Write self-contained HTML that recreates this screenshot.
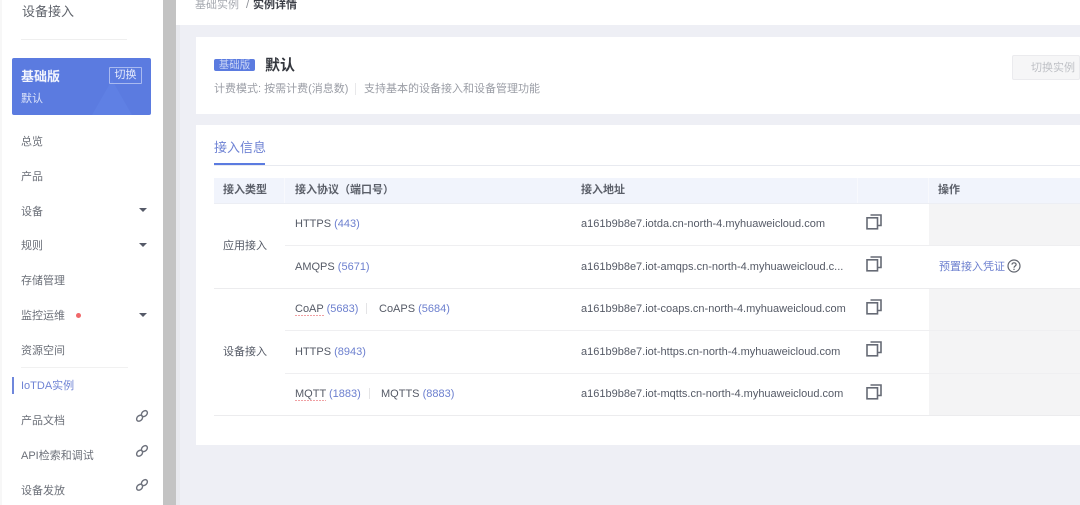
<!DOCTYPE html>
<html><head><meta charset="utf-8">
<style>
html,body{margin:0;padding:0}
body{width:1080px;height:505px;overflow:hidden;position:relative;background:#eeeff5;font-family:"Liberation Sans","Noto Sans CJK SC",sans-serif;color:#575d6c}
#w{position:absolute;left:0;top:0;width:1080px;height:505px;filter:blur(0.35px)}
.a{position:absolute;white-space:nowrap;line-height:16px}
.r{position:absolute}
.m{font-size:11px;left:21px;color:#6b6f78}
.t{font-size:11px;color:#555a66}
.b{color:#6d80cf}
.ar{position:absolute;left:139px;width:0;height:0;border-left:4px solid transparent;border-right:4px solid transparent;border-top:4.5px solid #555a68}
svg{position:absolute}
.u{position:absolute;height:1px;background:repeating-linear-gradient(90deg,#f0a0a3 0 2px,transparent 2px 3px)}
</style></head><body><div id="w">
<div class="r" style="left:0;top:0;width:163px;height:505px;background:#fff"></div>
<div class="r" style="left:0;top:0;width:2px;height:505px;background:#f7f7f7"></div>
<div class="r" style="left:163px;top:0;width:13px;height:505px;background:#c3c3c3"></div>
<div class="r" style="left:176px;top:0;width:4px;height:505px;background:#e8e9ee"></div>
<div class="r" style="left:176px;top:0;width:904px;height:25px;background:#fff"></div>
<div class="r" style="left:196px;top:37px;width:884px;height:77px;background:#fff"></div>
<div class="r" style="left:196px;top:125px;width:884px;height:320px;background:#fff"></div>

<div class="a" style="left:22px;top:4px;font-size:13px;color:#60646c">设备接入</div>
<div class="r" style="left:21px;top:39px;width:106px;height:1px;background:#efefef"></div>
<div class="r" style="left:12px;top:58px;width:139px;height:57px;background:#5b7be0;border-radius:2px;overflow:hidden">
<svg style="left:72px;top:20px" width="52" height="37"><path d="M28 2L48 37H8Z" fill="#6283e6" opacity=".6"/></svg>
</div>
<div class="a" style="left:21px;top:69px;font-size:13px;font-weight:bold;color:#f3f5fd">基础版</div>
<div class="a" style="left:21px;top:91px;font-size:11px;color:#dde4fa">默认</div>
<div class="r" style="left:109px;top:67px;width:31px;height:15px;border:1px solid #a9baf0;border-radius:1px"></div>
<div class="a" style="left:109px;top:68px;width:33px;height:15px;font-size:11px;line-height:15px;text-align:center;color:#e4e9fb">切换</div>

<div class="a m" style="top:134px">总览</div>
<div class="a m" style="top:169px">产品</div>
<div class="a m" style="top:204px">设备</div><div class="ar" style="top:208px"></div>
<div class="a m" style="top:238px">规则</div><div class="ar" style="top:243px"></div>
<div class="a m" style="top:273px">存储管理</div>
<div class="a m" style="top:308px">监控运维</div>
<div class="r" style="left:76px;top:313px;width:5px;height:5px;border-radius:50%;background:#f0686a"></div>
<div class="ar" style="top:313px"></div>
<div class="a m" style="top:343px">资源空间</div>
<div class="r" style="left:21px;top:367px;width:107px;height:1px;background:#f1f1f1"></div>
<div class="r" style="left:12px;top:377px;width:2px;height:17px;background:#6f87dc"></div>
<div class="a m" style="top:378px;color:#6f83d4">IoTDA实例</div>
<div class="a m" style="top:413px">产品文档</div>
<div class="a m" style="top:448px">API检索和调试</div>
<div class="a m" style="top:483px">设备发放</div>
<svg style="left:135px;top:409px" width="14" height="14" fill="none" stroke="#6d717c" stroke-width="1.4"><ellipse cx="4.6" cy="9.2" rx="3.4" ry="2.5" transform="rotate(-45 4.6 9.2)"/><ellipse cx="9.4" cy="4.6" rx="3.4" ry="2.5" transform="rotate(-45 9.4 4.6)"/></svg>
<svg style="left:135px;top:444px" width="14" height="14" fill="none" stroke="#6d717c" stroke-width="1.4"><ellipse cx="4.6" cy="9.2" rx="3.4" ry="2.5" transform="rotate(-45 4.6 9.2)"/><ellipse cx="9.4" cy="4.6" rx="3.4" ry="2.5" transform="rotate(-45 9.4 4.6)"/></svg>
<svg style="left:135px;top:478px" width="14" height="14" fill="none" stroke="#6d717c" stroke-width="1.4"><ellipse cx="4.6" cy="9.2" rx="3.4" ry="2.5" transform="rotate(-45 4.6 9.2)"/><ellipse cx="9.4" cy="4.6" rx="3.4" ry="2.5" transform="rotate(-45 9.4 4.6)"/></svg>

<div class="a" style="left:195px;top:-3px;font-size:11px;color:#a6a9b0">基础实例</div>
<div class="a" style="left:246px;top:-3px;font-size:11px;color:#8a8d94">/</div>
<div class="a" style="left:253px;top:-3px;font-size:11px;font-weight:bold;color:#3b3e46">实例详情</div>

<div class="a" style="left:214px;top:59px;width:41px;height:12px;background:#5b7be0;border-radius:2px;font-size:10.5px;line-height:12px;text-align:center;color:#c9d4f6">基础版</div>
<div class="a" style="left:265px;top:58px;font-size:15px;font-weight:bold;color:#33363d">默认</div>
<div class="a" style="left:214px;top:81px;font-size:11px;color:#9a9da5">计费模式: 按需计费(消息数)</div>
<div class="r" style="left:355px;top:83px;width:1px;height:12px;background:#e8e8ea"></div>
<div class="a" style="left:364px;top:81px;font-size:11px;color:#9a9da5">支持基本的设备接入和设备管理功能</div>
<div class="r" style="left:1012px;top:55px;width:68px;height:25px;background:#f6f6f7;border:1px solid #ebebee;box-sizing:border-box;border-radius:2px"></div>
<div class="a" style="left:1031px;top:60px;font-size:11px;color:#bfc1c6">切换实例</div>

<div class="a" style="left:214px;top:140px;font-size:13px;color:#6f83d4">接入信息</div>
<div class="r" style="left:214px;top:165px;width:866px;height:1px;background:#e8eaf0"></div>
<div class="r" style="left:214px;top:163px;width:51px;height:2px;background:#5b7be0"></div>

<div class="r" style="left:214px;top:178px;width:866px;height:25px;background:#f1f4fc"></div>
<div class="r" style="left:214px;top:203px;width:866px;height:1px;background:#eceef4"></div>
<div class="r" style="left:284px;top:178px;width:1px;height:25px;background:#f8f9fd"></div>
<div class="r" style="left:857px;top:178px;width:1px;height:25px;background:#f8f9fd"></div>
<div class="r" style="left:928px;top:178px;width:1px;height:25px;background:#f8f9fd"></div>
<div class="a" style="left:223px;top:182px;font-size:11px;font-weight:bold;color:#5b5f69">接入类型</div>
<div class="a" style="left:295px;top:182px;font-size:11px;font-weight:bold;color:#5b5f69">接入协议（端口号）</div>
<div class="a" style="left:581px;top:182px;font-size:11px;font-weight:bold;color:#5b5f69">接入地址</div>
<div class="a" style="left:938px;top:182px;font-size:11px;font-weight:bold;color:#5b5f69">操作</div>

<div class="r" style="left:929px;top:204px;width:151px;height:41px;background:#f4f4f5"></div>
<div class="r" style="left:929px;top:289px;width:151px;height:126px;background:#f4f4f5"></div>

<div class="r" style="left:285px;top:245px;width:795px;height:1px;background:#efeff1"></div>
<div class="r" style="left:214px;top:288px;width:866px;height:1px;background:#ececee"></div>
<div class="r" style="left:285px;top:330px;width:795px;height:1px;background:#efeff1"></div>
<div class="r" style="left:285px;top:373px;width:795px;height:1px;background:#efeff1"></div>
<div class="r" style="left:214px;top:415px;width:866px;height:1px;background:#ececee"></div>

<div class="a t" style="left:223px;top:238px">应用接入</div>
<div class="a t" style="left:223px;top:344px">设备接入</div>

<div class="a t" style="left:295px;top:216px">HTTPS <span class="b">(443)</span></div>
<div class="a t" style="left:295px;top:259px">AMQPS <span class="b">(5671)</span></div>
<div class="a t" style="left:295px;top:301px">CoAP <span class="b">(5683)</span></div>
<div class="r" style="left:366px;top:303px;width:1px;height:11px;background:#e4e4e6"></div>
<div class="a t" style="left:379px;top:301px">CoAPS <span class="b">(5684)</span></div>
<div class="u" style="left:295px;top:315px;width:29px"></div>
<div class="a t" style="left:295px;top:344px">HTTPS <span class="b">(8943)</span></div>
<div class="a t" style="left:295px;top:386px">MQTT <span class="b">(1883)</span></div>
<div class="r" style="left:369px;top:388px;width:1px;height:11px;background:#e4e4e6"></div>
<div class="a t" style="left:381px;top:386px">MQTTS <span class="b">(8883)</span></div>
<div class="u" style="left:295px;top:400px;width:31px"></div>

<div class="a t" style="left:581px;top:216px">a161b9b8e7.iotda.cn-north-4.myhuaweicloud.com</div>
<div class="a t" style="left:581px;top:259px">a161b9b8e7.iot-amqps.cn-north-4.myhuaweicloud.c...</div>
<div class="a t" style="left:581px;top:301px">a161b9b8e7.iot-coaps.cn-north-4.myhuaweicloud.com</div>
<div class="a t" style="left:581px;top:344px">a161b9b8e7.iot-https.cn-north-4.myhuaweicloud.com</div>
<div class="a t" style="left:581px;top:386px">a161b9b8e7.iot-mqtts.cn-north-4.myhuaweicloud.com</div>

<svg style="left:866px;top:214px" width="16" height="16" fill="none" stroke="#666a75" stroke-width="1.6"><rect x="1" y="3.8" width="10.5" height="11"/><path d="M4.5 1H15V11.5H11.5"/></svg>
<svg style="left:866px;top:256px" width="16" height="16" fill="none" stroke="#666a75" stroke-width="1.6"><rect x="1" y="3.8" width="10.5" height="11"/><path d="M4.5 1H15V11.5H11.5"/></svg>
<svg style="left:866px;top:299px" width="16" height="16" fill="none" stroke="#666a75" stroke-width="1.6"><rect x="1" y="3.8" width="10.5" height="11"/><path d="M4.5 1H15V11.5H11.5"/></svg>
<svg style="left:866px;top:341px" width="16" height="16" fill="none" stroke="#666a75" stroke-width="1.6"><rect x="1" y="3.8" width="10.5" height="11"/><path d="M4.5 1H15V11.5H11.5"/></svg>
<svg style="left:866px;top:384px" width="16" height="16" fill="none" stroke="#666a75" stroke-width="1.6"><rect x="1" y="3.8" width="10.5" height="11"/><path d="M4.5 1H15V11.5H11.5"/></svg>

<div class="a" style="left:939px;top:259px;font-size:11px;color:#6d80cf">预置接入凭证</div>
<svg style="left:1007px;top:259px" width="14" height="14" fill="none" stroke="#5f636d" stroke-width="1.2"><circle cx="7" cy="7" r="6"/><path d="M5 5.6C5 3.2 9.1 3.2 9.1 5.6C9.1 7 7 7 7 8.8"/><path d="M7 9.7V11"/></svg>
</div></body></html>
